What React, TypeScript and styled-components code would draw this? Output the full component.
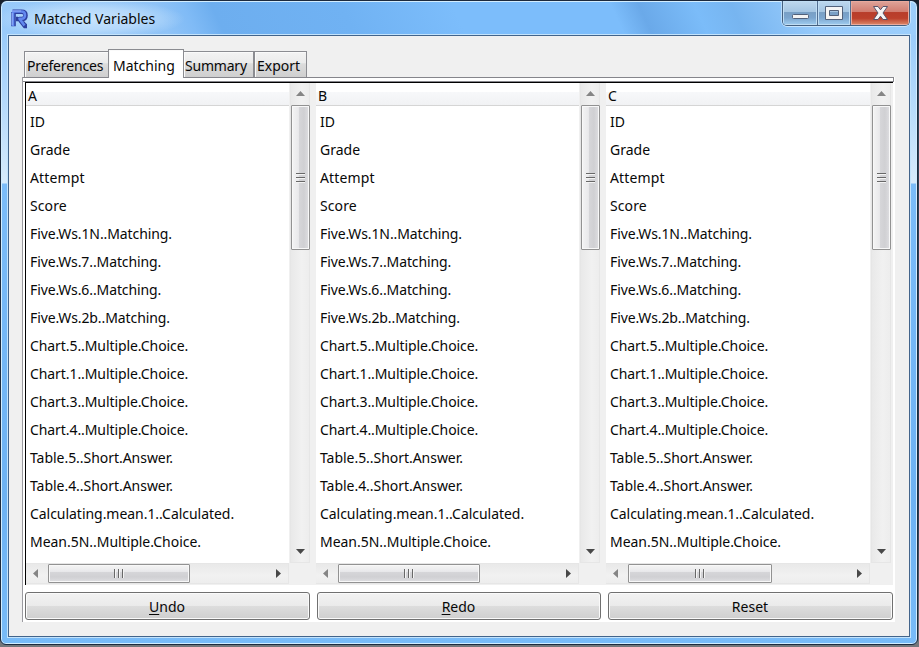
import React from "react";
import styled, { createGlobalStyle, css } from "styled-components";

const GlobalStyle = createGlobalStyle`
  *, *::before, *::after { box-sizing: border-box; }
  body {
    margin: 0;
    overflow: hidden;
    background: #48525e;
    color: #080808;
    font: 14px/20px "Noto Sans", "Open Sans", sans-serif;
  }
`;

const Desktop = styled.div`
  width: 919px;
  height: 647px;
  background: linear-gradient(#17202c 0, #17202c 24px, #33475c 60px, #243b52 500px, #74777b 644px);
`;

const WindowFrame = styled.div`
  width: 918px;
  height: 645px;
  border: 1px solid #1c2a3e;
  border-radius: 7px 7px 6px 6px;
  box-shadow: inset 0 0 0 1px #d2edff;
  background:
    linear-gradient(to bottom, #8ec5fa 0, #a4d1fb 60px, #d7ebfc 182px, #7bbcf9 183px, #6db2f3 500px, #78bbf8 100%);
  display: flex;
  flex-direction: column;
  padding: 0 8px 7px 7px;
`;

const TitleBar = styled.header`
  height: 34px;
  margin: 0 -7px 0 -6px;
  padding: 0 6px 0 3px;
  flex: none;
  display: flex;
  align-items: flex-start;
  border-radius: 6px 6px 0 0;
  border-top: 1px solid #d2edff;
  background:
    radial-gradient(ellipse 95px 20px at 88px 17px, rgba(205, 231, 253, 0.9) 0, rgba(195, 225, 252, 0.7) 55%, transparent 100%),
    linear-gradient(65deg, #9acbfa 0, #8fc3f7 18%, #80bbf6 21%, #6daeef 24%, #70b2f3 38%, #7cbdfb 50%, #7cbdfb 67%, #6aa9e9 70%, #7bbcf9 76%, #77b5f0 80%, #96cafb 88%, #9dcffc 100%);
`;

const LogoSvg = styled.svg`
  width: 20px;
  height: 20px;
  margin: 6px 0 0 5px;
  flex: none;
  overflow: visible;
`;

const Title = styled.h1`
  margin: 7px auto 0 4px;
  font-size: 14px;
  line-height: 20px;
  font-weight: 400;
`;

const CaptionButtons = styled.div`
  display: flex;
  width: 128px;
  height: 25px;
  margin-top: -1px;
  border: 1px solid #45607f;
  border-top: 0;
  border-radius: 0 0 5px 5px;
  box-shadow: 0 1px 0 #c9e5fd, -1px 0 0 #b9dcfb, 1px 0 0 #c9e5fd;
  overflow: hidden;
`;

const CaptionButton = styled.button<{ $width: number; $danger?: boolean }>`
  width: ${(p) => p.$width}px;
  height: 24px;
  padding: 0;
  border: 0;
  border-right: ${(p) => (p.$danger ? 0 : "1px solid #526e91")};
  display: grid;
  place-items: center;
  box-shadow: inset 0 0 0 1px ${(p) => (p.$danger ? "#e8aa9d" : "#c0ddf3")};
  background: ${(p) =>
    p.$danger
      ? "linear-gradient(#dfa49a 0, #d17d70 45%, #b83d2b 48%, #bc402c 72%, #dd8b6b 100%)"
      : "linear-gradient(#bed8ee 0, #a4c5e2 45%, #789fc5 48%, #7ba5ce 70%, #a1cdf0 100%)"};
`;

const Client = styled.main`
  width: 902px;
  height: 603px;
  border: 1px solid #42648b;
  box-shadow: 0 0 0 1px #c3e3fc;
  background: #f0f0f0;
  padding: 13px 0 0 13px;
`;

const TabStrip = styled.nav`
  display: flex;
  align-items: flex-end;
  height: 29px;
  padding-left: 2px;
  position: relative;
  z-index: 1;
`;

const Tab = styled.button<{ $width: number; $active?: boolean; $spacing: number }>`
  width: ${(p) => p.$width}px;
  height: 26px;
  margin: 0 0 1px;
  padding: 4px 0 0 ${(p) => (p.$width === 70 ? 1 : 2)}px;
  border: 1px solid #8b8c91;
  border-bottom: 0;
  border-left-width: ${(p) => (p.$width === 70 ? 0 : 1)}px;
  box-shadow: inset 1px 1px 0 #fafafa;
  background: linear-gradient(#f3f3f3 0, #ebebeb 43%, #dcdcdc 47%, #cfcfcf 100%);
  font: inherit;
  color: inherit;
  letter-spacing: ${(p) => p.$spacing}px;
  white-space: nowrap;
  display: flex;
  justify-content: flex-start;
  ${(p) =>
    p.$active &&
    css`
      height: 29px;
      margin: 0 0 0 -1px;
      padding: 6px 0 0 4px;
      background: #fff;
    `}
`;

const Panel = styled.section`
  width: 873px;
  height: 545px;
  margin-top: -1px;
  border-left: 1px solid #9b9ba0;
  background: #fff;
`;

const PanelTop = styled.div`
  width: 871px;
  height: 5px;
  border: 1px solid #85858b;
  border-left: 0;
`;

const Lists = styled.div`
  display: flex;
  width: 868px;
  height: 503px;
  margin-left: 2px;
  border-top: 1px solid #000;
  border-left: 1px solid #000;
  background: #f0f0f0;
`;

const ListColumn = styled.section<{ $width: number; $list: number }>`
  width: ${(p) => p.$width}px;
  height: 502px;
  display: grid;
  grid-template-columns: ${(p) => p.$list}px 20px;
  grid-template-rows: 480px 21px;
  column-gap: 1px;
`;

const List = styled.div`
  background: #fff;
  overflow: hidden;
`;

const ListHeader = styled.div`
  height: 23px;
  padding: 3px 0 0 2px;
  border-bottom: 1px solid #d5d5d5;
  background: linear-gradient(#fff 0, #fff 40%, #f7f8fa 42%, #f1f2f4 100%);
`;

const Items = styled.ul`
  margin: 0;
  padding: 2px 0 0 4px;
  list-style: none;
`;

const Item = styled.li<{ $spacing: number }>`
  height: 28px;
  line-height: 28px;
  white-space: nowrap;
  letter-spacing: ${(p) => p.$spacing}px;
`;

const VerticalBar = styled.div`
  display: grid;
  grid-template-rows: 22px 145px 1fr 23px;
  justify-items: center;
  border: solid #e6e6e6;
  border-width: 0 1px 1px;
  background: linear-gradient(90deg, #e9e9e9, #f1f1f1 60%, #ededed);
`;

const HorizontalBar = styled.div<{ $thumb: number }>`
  display: grid;
  grid-template-columns: 22px ${(p) => p.$thumb}px 1fr 23px;
  align-items: center;
  border: solid #e6e6e6;
  border-width: 1px 1px 1px 0;
  background: linear-gradient(#e9e9e9, #f1f1f1 60%, #ededed);
`;

const Thumb = styled.div<{ $vertical?: boolean }>`
  width: ${(p) => (p.$vertical ? "19px" : "100%")};
  height: ${(p) => (p.$vertical ? "100%" : "19px")};
  border: 1px solid #929292;
  border-radius: 1px;
  box-shadow: inset 0 0 0 1px #f8f8f8;
  background: linear-gradient(${(p) => (p.$vertical ? "90deg" : "180deg")}, #f4f4f4 0, #e9e9eb 38%, #d6d6d9 42%, #d0d0d3 70%, #dfdfe2 100%);
  display: flex;
  flex-direction: ${(p) => (p.$vertical ? "column" : "row")};
  align-items: center;
  justify-content: center;
  gap: 2px;
`;

const GripLine = styled.i<{ $vertical?: boolean }>`
  width: ${(p) => (p.$vertical ? 9 : 2)}px;
  height: ${(p) => (p.$vertical ? 2 : 9)}px;
  background: linear-gradient(${(p) => (p.$vertical ? "180deg" : "90deg")}, #686868 50%, #f4f4f4 50%);
`;

const Arrow = styled.svg`
  width: 9px;
  height: 9px;
  align-self: center;
  justify-self: center;
`;

const Actions = styled.div`
  display: grid;
  grid-template-columns: 285px 284px 285px;
  column-gap: 7px;
  padding: 7px 0 0 2px;
`;

const ActionButton = styled.button`
  height: 28px;
  padding: 1px 1px 0 0;
  border: 1px solid #707070;
  border-radius: 3px;
  box-shadow: inset 0 0 0 1px #fafafa;
  background: linear-gradient(#f2f2f2 0, #ebebeb 48%, #dddddd 50%, #cfcfcf 100%);
  font: inherit;
  color: inherit;
`;

const Mnemonic = styled.span`
  text-decoration: underline;
  text-underline-offset: 2px;
  text-decoration-thickness: 1px;
`;

const rows: [string, number][] = [
  ["ID", 0],
  ["Grade", 0],
  ["Attempt", 0.15],
  ["Score", 0.1],
  ["Five.Ws.1N..Matching.", -0.09],
  ["Five.Ws.7..Matching.", -0.1],
  ["Five.Ws.6..Matching.", -0.1],
  ["Five.Ws.2b..Matching.", -0.09],
  ["Chart.5..Multiple.Choice.", -0.08],
  ["Chart.1..Multiple.Choice.", -0.08],
  ["Chart.3..Multiple.Choice.", -0.08],
  ["Chart.4..Multiple.Choice.", -0.08],
  ["Table.5..Short.Answer.", -0.04],
  ["Table.4..Short.Answer.", -0.04],
  ["Calculating.mean.1..Calculated.", -0.04],
  ["Mean.5N..Multiple.Choice.", -0.03],
];

const columns = [
  { name: "A", width: 290, list: 263, thumb: 142 },
  { name: "B", width: 290, list: 263, thumb: 142 },
  { name: "C", width: 287, list: 264, thumb: 144 },
];

const arrowPaths = {
  up: "M0 6L4.5 1L9 6Z",
  down: "M0 3L4.5 8L9 3Z",
  left: "M5 0L0 4.5L5 9Z",
  right: "M4 0L9 4.5L4 9Z",
};

function ScrollArrow({ direction }: { direction: keyof typeof arrowPaths }) {
  const dark = direction === "down" || direction === "right";
  return (
    <Arrow viewBox="0 0 9 9" aria-hidden="true">
      <path d={arrowPaths[direction]} fill={dark ? "#484848" : "#858585"} />
    </Arrow>
  );
}

function ScrollThumb({ vertical = false }: { vertical?: boolean }) {
  return (
    <Thumb $vertical={vertical}>
      {[0, 1, 2].map((n) => <GripLine key={n} $vertical={vertical} />)}
    </Thumb>
  );
}

function VariableList({ name, width, list, thumb }: (typeof columns)[number]) {
  return (
    <ListColumn $width={width} $list={list}>
      <List>
        <ListHeader>{name}</ListHeader>
        <Items>
          {rows.map(([label, spacing]) => <Item key={label} $spacing={spacing}>{label}</Item>)}
        </Items>
      </List>
      <VerticalBar>
        <ScrollArrow direction="up" />
        <ScrollThumb vertical />
        <span />
        <ScrollArrow direction="down" />
      </VerticalBar>
      <HorizontalBar $thumb={thumb}>
        <ScrollArrow direction="left" />
        <ScrollThumb />
        <span />
        <ScrollArrow direction="right" />
      </HorizontalBar>
    </ListColumn>
  );
}

export default function App() {
  return (
    <>
      <GlobalStyle />
      <Desktop>
        <WindowFrame>
          <TitleBar>
            <LogoSvg viewBox="0 0 20 20" aria-hidden="true">
              <g fill="none" strokeLinejoin="round">
                <path d="M2.5 3.8H11.5Q15.5 3.8 15.5 7.4T11.5 11H9.5L15 18H17M3.5 4V18.2M8 11H6" stroke="#2d3f9f" strokeWidth="4.6" />
                <path d="M2 3.5H11.5Q15 3.5 15 7.2T11.5 10.8H9.5L14.5 17.5M3 4V18" stroke="#6288ee" strokeWidth="2.6" />
                <path d="M1.5 3H11M2.2 5V17" stroke="#a4baf8" strokeWidth="0.8" />
              </g>
            </LogoSvg>
            <Title>Matched Variables</Title>
            <CaptionButtons>
              <CaptionButton $width={35} aria-label="Minimize">
                <svg width="18" height="20"><rect x="1.5" y="11.5" width="16" height="4" rx="1" fill="#f4f4f4" stroke="#52617a" /></svg>
              </CaptionButton>
              <CaptionButton $width={33} aria-label="Maximize">
                <svg width="18" height="16"><path fillRule="evenodd" d="M.5 1.5H17.5V14.5H.5ZM4.5 5.5V10.5H13.5V5.5Z" fill="#f4f4f4" stroke="#52617a" /></svg>
              </CaptionButton>
              <CaptionButton $width={58} $danger aria-label="Close">
                <svg width="17" height="16"><path d="M1.5 1.5H6L8.5 4.8L11 1.5H15.5L11 8L15.5 14.5H11L8.5 11.2L6 14.5H1.5L6 8Z" fill="#f5f5f5" stroke="#59546a" strokeLinejoin="round" /></svg>
              </CaptionButton>
            </CaptionButtons>
          </TitleBar>
          <Client>
            <TabStrip>
              <Tab $width={85} $spacing={-0.15}>Preferences</Tab>
              <Tab $width={76} $active $spacing={0}>Matching</Tab>
              <Tab $width={70} $spacing={-0.2}>Summary</Tab>
              <Tab $width={53} $spacing={0}>Export</Tab>
            </TabStrip>
            <Panel>
              <PanelTop />
              <Lists>
                {columns.map((column) => <VariableList key={column.name} {...column} />)}
              </Lists>
              <Actions>
                <ActionButton><Mnemonic>U</Mnemonic>ndo</ActionButton>
                <ActionButton><Mnemonic>R</Mnemonic>edo</ActionButton>
                <ActionButton>Reset</ActionButton>
              </Actions>
            </Panel>
          </Client>
        </WindowFrame>
      </Desktop>
    </>
  );
}
